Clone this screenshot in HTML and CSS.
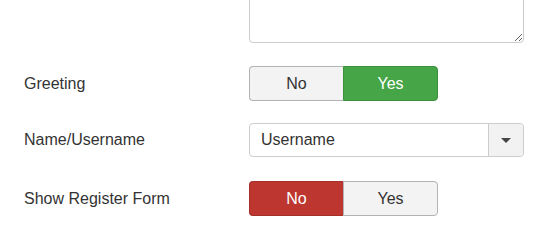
FILE: index.html
```html
<!DOCTYPE html>
<html lang="en">
<head>
  <meta charset="UTF-8">
  <title>Module Options</title>
  <link rel="stylesheet" href="styles.css">
</head>
<body>
  <div class="form">
    <!-- tail of the textarea above -->
    <div class="row row-text">
      <div class="label"></div>
      <div class="control">
        <textarea class="textarea"></textarea>
      </div>
    </div>

    <div class="row">
      <div class="label">Greeting</div>
      <div class="control">
        <div class="toggle">
          <button class="btn">No</button>
          <button class="btn btn-yes">Yes</button>
        </div>
      </div>
    </div>

    <div class="row row-select">
      <div class="label">Name/Username</div>
      <div class="control">
        <div class="select">
          <span class="select-value">Username</span>
          <span class="select-arrow"><b></b></span>
        </div>
      </div>
    </div>

    <div class="row row-last">
      <div class="label">Show Register Form</div>
      <div class="control">
        <div class="toggle">
          <button class="btn btn-no">No</button>
          <button class="btn">Yes</button>
        </div>
      </div>
    </div>
  </div>
</body>
</html>
```

FILE: styles.css
```css
* {
  margin: 0;
  padding: 0;
  box-sizing: border-box;
}

body {
  font-family: "Liberation Sans", Arial, sans-serif;
  font-size: 16px;
  color: #333;
  background: #fff;
  overflow: hidden;
}

.form {
  display: flex;
  flex-direction: column;
  padding-left: 24px;
}

.row {
  display: flex;
  align-items: center;
  margin-top: 23px;
}

.row-text {
  margin-top: -38px;
}

.row-select {
  margin-top: 22px;
}

.row-last {
  margin-top: 24px;
}

.label {
  width: 225px;
  line-height: 20px;
}

.control {
  width: 275px;
}

.textarea {
  display: block;
  width: 275px;
  height: 81px;
  border: 1px solid #ccc;
  border-radius: 4px;
  resize: vertical;
  font: inherit;
}

.toggle {
  display: flex;
  width: 189px;
  height: 35px;
}

.btn {
  flex: 1;
  font-family: inherit;
  font-size: 16px;
  color: #333;
  background: #f3f3f3;
  border: 1px solid #b3b3b3;
  cursor: pointer;
}

.btn:first-child {
  border-radius: 4px 0 0 4px;
  border-right: none;
}

.btn:last-child {
  border-radius: 0 4px 4px 0;
}

.btn-yes {
  background: #46a546;
  border-color: #3c903c;
  color: #fff;
}

.btn-no {
  background: #bd362f;
  border-color: #a52f29;
  color: #fff;
}

.select {
  display: flex;
  height: 34px;
  border: 1px solid #ccc;
  border-radius: 4px;
  background: #fff;
}

.select-value {
  flex: 1;
  padding-left: 11px;
  line-height: 32px;
}

.select-arrow {
  width: 35px;
  display: flex;
  align-items: center;
  justify-content: center;
  background: #f2f2f2;
  border-left: 1px solid #ccc;
  border-radius: 0 4px 4px 0;
}

.select-arrow b {
  width: 0;
  height: 0;
  border-left: 5px solid transparent;
  border-right: 5px solid transparent;
  border-top: 5px solid #444;
}
```
